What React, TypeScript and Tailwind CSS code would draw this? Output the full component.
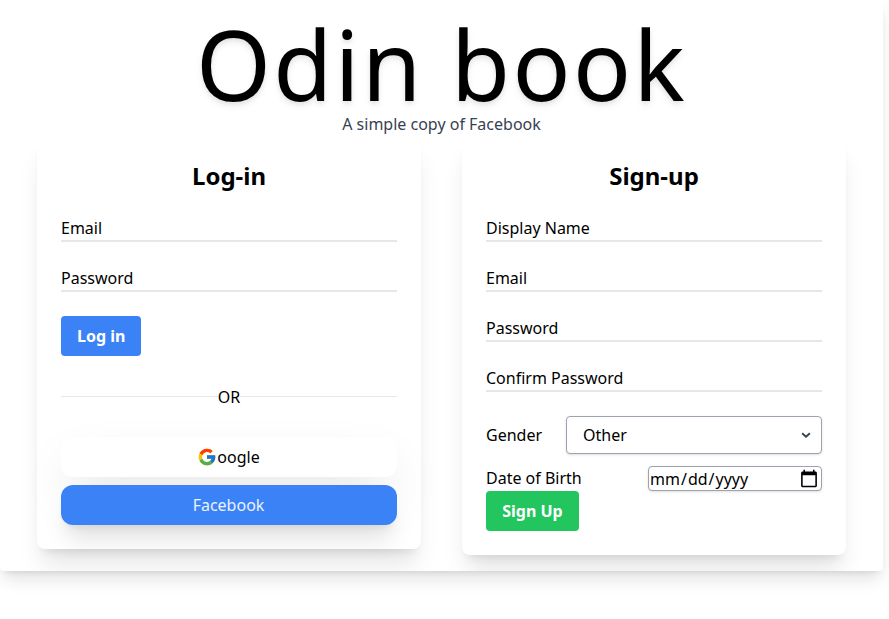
import React from "react";

function Field({ label, type = "text" }: { label: string; type?: string }) {
  return (
    <input
      type={type}
      placeholder={label}
      aria-label={label}
      className="block h-[26px] w-full border-b-2 border-gray-200 bg-transparent p-0 text-base leading-6 text-black placeholder:text-black placeholder:opacity-100 outline-none"
    />
  );
}

function GoogleIcon() {
  return (
    <svg viewBox="0 0 48 48" className="h-5 w-5" aria-hidden="true">
      <path fill="#FFC107" d="M43.611 20.083H42V20H24v8h11.303c-1.649 4.657-6.08 8-11.303 8-6.627 0-12-5.373-12-12s5.373-12 12-12c3.059 0 5.842 1.154 7.961 3.039l5.657-5.657C34.046 6.053 29.268 4 24 4 12.955 4 4 12.955 4 24s8.955 20 20 20 20-8.955 20-20c0-1.341-.138-2.65-.389-3.917z" />
      <path fill="#FF3D00" d="M6.306 14.691l6.571 4.819C14.655 15.108 18.961 12 24 12c3.059 0 5.842 1.154 7.961 3.039l5.657-5.657C34.046 6.053 29.268 4 24 4 16.318 4 9.656 8.337 6.306 14.691z" />
      <path fill="#4CAF50" d="M24 44c5.166 0 9.86-1.977 13.409-5.192l-6.19-5.238A11.91 11.91 0 0124 36c-5.202 0-9.619-3.317-11.283-7.946l-6.522 5.025C9.505 39.556 16.227 44 24 44z" />
      <path fill="#1976D2" d="M43.611 20.083H42V20H24v8h11.303a12.04 12.04 0 01-4.087 5.571l.003-.002 6.19 5.238C36.971 39.205 44 34 44 24c0-1.341-.138-2.65-.389-3.917z" />
    </svg>
  );
}

function Card({ title, children }: { title: string; children: React.ReactNode }) {
  return (
    <section className="w-96 rounded-lg bg-white p-6 shadow-xl">
      <h2 className="mb-6 text-center text-2xl font-bold">{title}</h2>
      {children}
    </section>
  );
}

export default function App() {
  return (
    <div className="h-screen overflow-hidden bg-white font-['Noto_Sans',sans-serif] text-base text-black">
      <main className="h-[571px] w-[883px] overflow-hidden rounded bg-white pt-2 shadow-[0_10px_18px_-3px_rgba(0,0,0,0.13),0_4px_6px_-4px_rgba(0,0,0,0.12)]">
        <header className="text-center">
          <h1 className="-mb-2 text-8xl leading-[112px] tracking-wide [filter:drop-shadow(0_4px_3px_rgb(0_0_0/0.07))_drop-shadow(0_2px_2px_rgb(0_0_0/0.06))]">Odin book</h1>
          <p className="text-[#374151]">A simple copy of Facebook</p>
        </header>
        <div className="flex items-start justify-between px-[37px]">
          <Card title="Log-in">
            <form className="flex flex-col items-start gap-6">
              <Field label="Email" />
              <Field label="Password" type="password" />
              <button type="button" className="rounded bg-[#3b82f6] px-4 py-2 font-bold text-white">
                Log in
              </button>
            </form>
            <div className="mt-[29px] mb-7 flex items-center">
              <span className="mb-px h-px flex-1 bg-gray-200" />
              <span>OR</span>
              <span className="mb-px h-px flex-1 bg-gray-200" />
            </div>
            <div className="flex flex-col gap-2">
              <button type="button" className="flex h-10 items-center justify-center rounded-xl bg-white pr-px shadow-2xl">
                <GoogleIcon />
                oogle
              </button>
              <button type="button" className="h-10 rounded-xl bg-[#3b82f6] pr-px text-white/90 shadow-xl">
                Facebook
              </button>
            </div>
          </Card>
          <Card title="Sign-up">
            <form className="flex flex-col">
              <div className="flex flex-col gap-6">
                <Field label="Display Name" />
                <Field label="Email" />
                <Field label="Password" type="password" />
                <Field label="Confirm Password" type="password" />
                <label className="flex items-center justify-between">
                  Gender
                  <span className="flex h-[38px] w-64 items-center justify-between rounded border border-[#9ca3af] bg-white pr-[7px] pl-4 shadow-sm">
                    Other
                    <svg viewBox="0 0 24 24" className="h-4 w-4 fill-none stroke-[#374151] stroke-[2.8]" aria-hidden="true">
                      <path d="M6.2 9.3l5.8 5.4 5.8-5.4" />
                    </svg>
                  </span>
                </label>
              </div>
              <label className="mt-3 flex items-start justify-between">
                Date of Birth
                <input
                  type="date"
                  aria-label="Date of Birth"
                  className="h-[25px] w-[174px] rounded border border-[#9ca3af] bg-white shadow-sm [&::-webkit-calendar-picker-indicator]:h-5 [&::-webkit-calendar-picker-indicator]:w-5"
                />
              </label>
              <button type="button" className="w-[93px] rounded bg-[#22c55e] py-2 font-bold text-white">
                Sign Up
              </button>
            </form>
          </Card>
        </div>
      </main>
    </div>
  );
}
